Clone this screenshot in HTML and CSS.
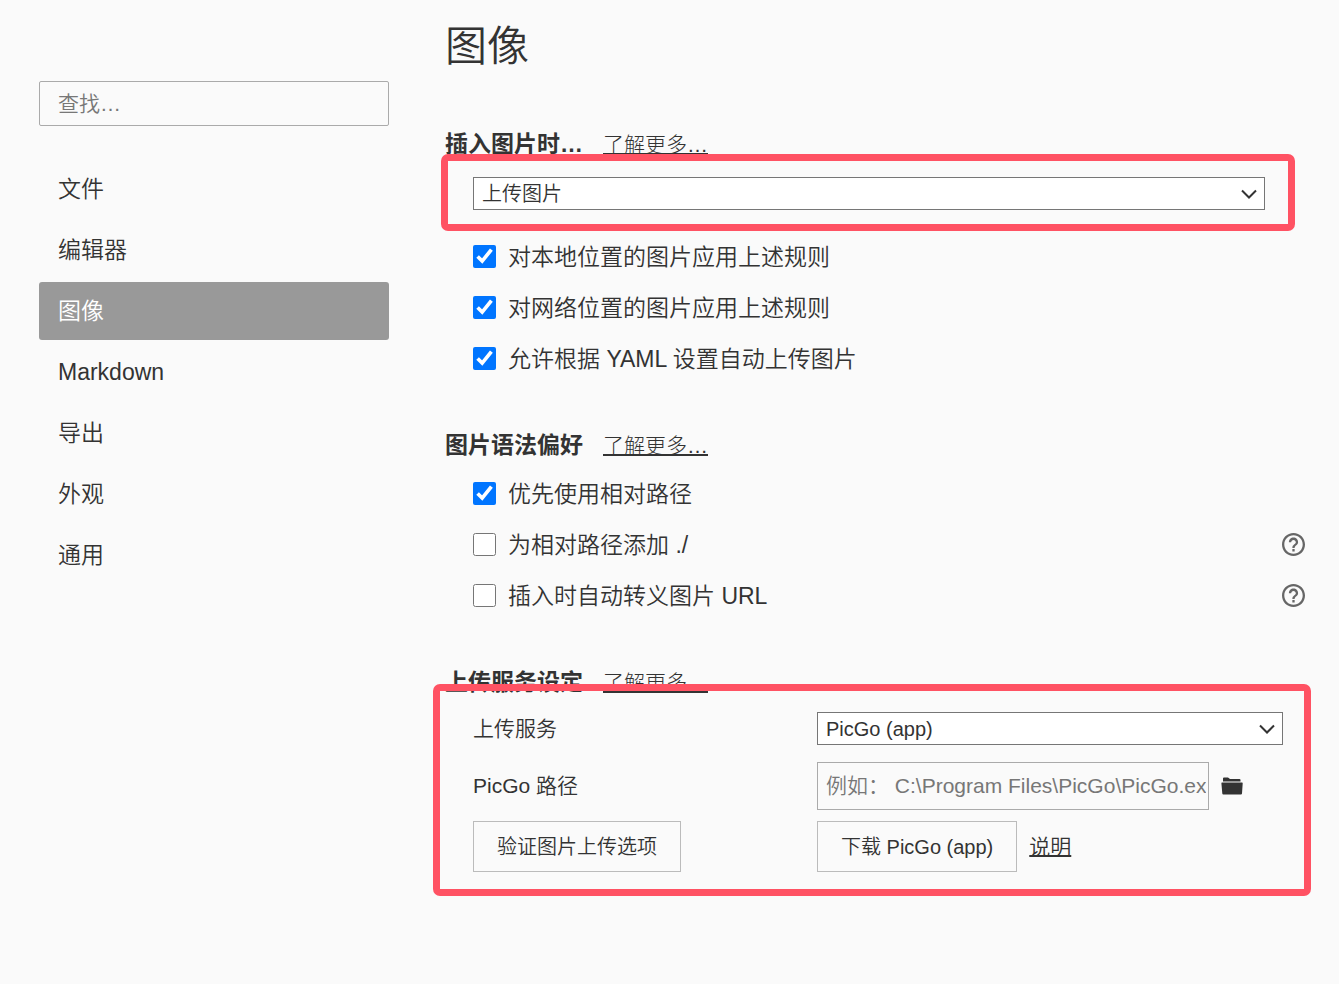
FILE: index.html
```html
<!DOCTYPE html>
<html lang="zh-CN">

<head>
    <meta charset="UTF-8">
    <title>偏好设置 - 图像</title>
    <link rel="stylesheet" href="styles.css">
</head>

<body>

    <div class="page">

        <aside class="sidebar">
            <input class="search" type="text" placeholder="查找…" aria-label="查找">
            <nav class="menu">
                <a href="#file">文件</a>
                <a href="#editor">编辑器</a>
                <a href="#image" class="active">图像</a>
                <a href="#markdown">Markdown</a>
                <a href="#export">导出</a>
                <a href="#appearance">外观</a>
                <a href="#general">通用</a>
            </nav>
        </aside>

        <main class="content">
            <h1>图像</h1>

            <section>
                <div class="head">
                    <h2>插入图片时…</h2>
                    <a href="#insert-more">了解更多…</a>
                </div>
                <div class="body">
                    <div class="action">
                        <div class="select">
                            <select aria-label="插入图片时">
                                <option>上传图片</option>
                            </select>
                            <svg class="arrow" viewBox="0 0 16 10"><path d="M1 1.5l7 7 7-7" /></svg>
                        </div>
                        <div class="mark mark-action"></div>
                    </div>
                    <div class="row">
                        <label><input type="checkbox" checked>对本地位置的图片应用上述规则</label>
                    </div>
                    <div class="row">
                        <label><input type="checkbox" checked>对网络位置的图片应用上述规则</label>
                    </div>
                    <div class="row">
                        <label><input type="checkbox" checked>允许根据 YAML 设置自动上传图片</label>
                    </div>
                </div>
            </section>

            <section>
                <div class="head">
                    <h2>图片语法偏好</h2>
                    <a href="#syntax-more">了解更多…</a>
                </div>
                <div class="body syntax">
                    <div class="row">
                        <label><input type="checkbox" checked>优先使用相对路径</label>
                    </div>
                    <div class="row">
                        <label><input type="checkbox">为相对路径添加 ./</label>
                        <button class="icon" type="button" aria-label="帮助">
                            <svg class="help" viewBox="2 2 20 20"><path d="M11 18h2v-2h-2v2zm1-16C6.48 2 2 6.48 2 12s4.48 10 10 10 10-4.48 10-10S17.52 2 12 2zm0 18c-4.41 0-8-3.59-8-8s3.59-8 8-8 8 3.59 8 8-3.59 8-8 8zm0-14c-2.21 0-4 1.79-4 4h2c0-1.1.9-2 2-2s2 .9 2 2c0 2-3 1.75-3 5h2c0-2.25 3-2.5 3-5 0-2.21-1.79-4-4-4z" /></svg>
                        </button>
                    </div>
                    <div class="row">
                        <label><input type="checkbox">插入时自动转义图片 URL</label>
                        <button class="icon" type="button" aria-label="帮助">
                            <svg class="help" viewBox="2 2 20 20"><path d="M11 18h2v-2h-2v2zm1-16C6.48 2 2 6.48 2 12s4.48 10 10 10 10-4.48 10-10S17.52 2 12 2zm0 18c-4.41 0-8-3.59-8-8s3.59-8 8-8 8 3.59 8 8-3.59 8-8 8zm0-14c-2.21 0-4 1.79-4 4h2c0-1.1.9-2 2-2s2 .9 2 2c0 2-3 1.75-3 5h2c0-2.25 3-2.5 3-5 0-2.21-1.79-4-4-4z" /></svg>
                        </button>
                    </div>
                </div>
            </section>

            <section>
                <div class="head">
                    <h2>上传服务设定</h2>
                    <a href="#upload-more">了解更多…</a>
                </div>
                <div class="body">
                    <div class="upload">
                        <div class="field">
                            <label for="service">上传服务</label>
                            <div class="select">
                                <select id="service">
                                    <option>PicGo (app)</option>
                                </select>
                                <svg class="arrow" viewBox="0 0 16 10"><path d="M1 1.5l7 7 7-7" /></svg>
                            </div>
                        </div>
                        <div class="field path">
                            <label for="path">PicGo 路径</label>
                            <div class="picker">
                                <input id="path" type="text" placeholder="例如： C:\Program Files\PicGo\PicGo.exe">
                                <button class="icon" type="button" aria-label="选择文件">
                                    <svg class="folder" viewBox="0 0 22 18"><path d="M2 4.5v-3Q2 .5 3 .5h4L9 2h9.500q1 0 1 1v1.500zM1 5.500h20q.8 0 .7.800L21 16.500q-.1 1-1 1H2.300q-.9 0-1-1L.4 6.300q-.1-.8.6-.8z" /></svg>
                                </button>
                            </div>
                        </div>
                        <div class="field">
                            <div>
                                <button class="btn" type="button">验证图片上传选项</button>
                            </div>
                            <div class="download">
                                <button class="btn" type="button">下载 PicGo (app)</button>
                                <a href="#picgo">说明</a>
                            </div>
                        </div>
                        <div class="mark mark-upload"></div>
                    </div>
                </div>
            </section>
        </main>

    </div>

</body>

</html>
```
FILE: styles.css
```css
* {
    box-sizing: border-box;
}

body {
    margin: 0;
    background: #fafafa;
    color: #333;
    font-family: "Liberation Sans", "Noto Sans CJK SC", sans-serif;
    font-size: 23px;
    font-weight: 350;
    line-height: 32px;
}

input,
select,
button {
    margin: 0;
    font: inherit;
    color: inherit;
}

a {
    color: inherit;
}

.page {
    display: flex;
    gap: 56px;
    padding: 16px 34px 16px 39px;
}

/* 侧边栏 */
.sidebar {
    flex: 0 0 350px;
    padding-top: 65px;
}

.search {
    display: block;
    width: 100%;
    height: 45px;
    padding: 0 18px;
    border: 1px solid #aaa;
    border-radius: 2px;
    background: transparent;
    font-size: 21px;
}

::placeholder {
    color: #777;
}

.menu {
    display: flex;
    flex-direction: column;
    gap: 3px;
    margin-top: 34px;
}

.menu a {
    padding: 13px 19px;
    border-radius: 3px;
    text-decoration: none;
}

.menu .active {
    background: #999;
    color: #fff;
}

/* 内容 */
.content {
    flex: 1;
    min-width: 0;
}

h1 {
    margin: 0 0 50px;
    font-size: 42px;
    font-weight: 350;
    line-height: 62px;
}

h2 {
    margin: 0;
    font-size: 23px;
    line-height: 32px;
}

section {
    margin-bottom: 45px;
}

.head {
    display: flex;
    align-items: baseline;
    gap: 20px;
}

.head a,
.download a {
    font-size: 21px;
    text-decoration-thickness: 2px;
    text-underline-offset: 1px;
    text-decoration-skip-ink: none;
}

.head a {
    font-weight: 300;
}

.body {
    padding-left: 28px;
}

.syntax {
    padding-top: 6px;
}

.row {
    display: flex;
    align-items: center;
    justify-content: space-between;
    height: 51px;
}

.row label {
    display: flex;
    align-items: center;
    gap: 12px;
}

.row input {
    width: 23px;
    height: 23px;
}

.action {
    position: relative;
    margin: 16px 40px 21px 0;
}

.select {
    position: relative;
}

.select select {
    display: block;
    width: 100%;
    height: 33px;
    padding: 0 32px 4px 8px;
    border: 1px solid #767676;
    border-radius: 0;
    background: #fff;
    font-size: 20px;
    appearance: none;
}

.arrow {
    position: absolute;
    top: 12px;
    right: 8px;
    width: 16px;
    height: 10px;
    fill: none;
    stroke: #333;
    stroke-width: 2;
    pointer-events: none;
}

.icon {
    display: flex;
    padding: 0;
    border: 0;
    background: none;
}

.help {
    width: 23px;
    height: 23px;
    fill: #666;
}

.folder {
    width: 22px;
    height: 18px;
    fill: #333;
}

/* 上传服务 */
.upload {
    position: relative;
    margin: 13px 22px 0 0;
    font-size: 21px;
}

.field {
    display: grid;
    grid-template-columns: 344px 1fr;
    align-items: center;
}

.path {
    margin: 17px 0 11px;
}

.picker {
    display: flex;
    align-items: center;
    gap: 12px;
    padding-right: 40px;
}

.picker input {
    flex: 1;
    min-width: 0;
    height: 48px;
    padding: 0 2px 0 8px;
    border: 1px solid #aaa;
    background: transparent;
}

.btn {
    height: 51px;
    padding: 0 23px;
    border: 1px solid #bbb;
    background: transparent;
    font-size: 20px;
}

.download {
    display: flex;
    align-items: center;
    gap: 12px;
}

/* 红色标注框 */
.mark {
    position: absolute;
    border: 7px solid #ff5263;
    border-radius: 7px;
    pointer-events: none;
}

.mark-action {
    inset: -23px -30px -21px -32px;
}

.mark-upload {
    inset: -28px -28px -24px -40px;
}
```
